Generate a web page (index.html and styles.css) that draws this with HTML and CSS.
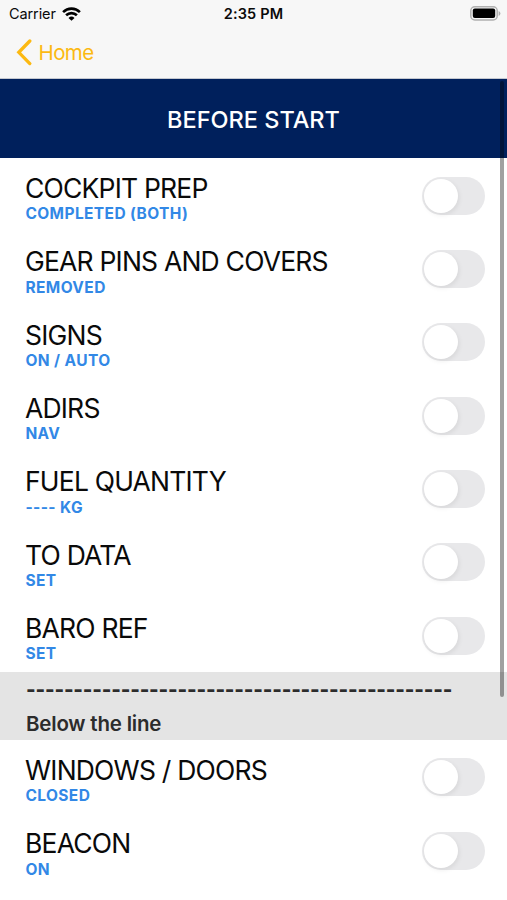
FILE: index.html
```html
<!DOCTYPE html>
<html lang="en">
<head>
<meta charset="utf-8">
<title>Before Start</title>
<link rel="stylesheet" href="styles.css">
</head>
<body>
<div class="screen">
  <header class="top">
    <div class="status">
      <div class="carrier"><span>Carrier</span>
        <svg class="wifi" width="19" height="14" viewBox="0 0 19 14"><g fill="none" stroke="#000" stroke-width="2.6"><path d="M1.1 5.1a12 12 0 0 1 16.8 0"/><path d="M4.1 8.3a7.7 7.7 0 0 1 10.8 0"/></g><path d="M6.5 10.9a4.3 4.3 0 0 1 6 0L9.5 13.8z"/></svg>
      </div>
      <div class="time">2:35 PM</div>
      <svg class="battery" width="31" height="15" viewBox="0 0 31 15"><rect x=".8" y=".8" width="26.4" height="13.2" rx="4" fill="#f7f7f7" stroke="#b0b0b0" stroke-width="1.5"/><rect x="2.8" y="2.6" width="22.4" height="9.4" rx="2" fill="#000"/><path d="M28.6 5v5q1.8-.8 1.8-2.5T28.6 5z" fill="#b0b0b0"/></svg>
    </div>
    <nav class="nav">
      <svg width="17" height="27" viewBox="0 0 17 27"><path d="M14.8 2 3.8 13.3 14.8 24.6" fill="none" stroke="#fcb912" stroke-width="3.3" stroke-linecap="round" stroke-linejoin="miter"/></svg>
      <span class="home">Home</span>
    </nav>
  </header>
  <h1 class="banner"><span>BEFORE START</span></h1>
  <main>
    <div class="row"><div><div class="name">COCKPIT PREP</div><div class="value">COMPLETED (BOTH)</div></div><div class="toggle"></div></div>
    <div class="row"><div><div class="name">GEAR PINS AND COVERS</div><div class="value">REMOVED</div></div><div class="toggle"></div></div>
    <div class="row"><div><div class="name">SIGNS</div><div class="value">ON / AUTO</div></div><div class="toggle"></div></div>
    <div class="row"><div><div class="name">ADIRS</div><div class="value">NAV</div></div><div class="toggle"></div></div>
    <div class="row"><div><div class="name">FUEL QUANTITY</div><div class="value">---- KG</div></div><div class="toggle"></div></div>
    <div class="row"><div><div class="name">TO DATA</div><div class="value">SET</div></div><div class="toggle"></div></div>
    <div class="row"><div><div class="name">BARO REF</div><div class="value">SET</div></div><div class="toggle"></div></div>
    <div class="section"><div class="dashes">---------------------------------------------</div><div class="below">Below the line</div></div>
    <div class="row"><div><div class="name">WINDOWS / DOORS</div><div class="value">CLOSED</div></div><div class="toggle"></div></div>
    <div class="row"><div><div class="name">BEACON</div><div class="value">ON</div></div><div class="toggle"></div></div>
  </main>
  <div class="scrollbar"></div>
</div>
</body>
</html>
```
FILE: styles.css
```css
* { box-sizing: border-box; }
body { margin: 0; background: #fff; font-family: Inter, "Liberation Sans", sans-serif; color: #0a0a0a; }
.screen { position: relative; width: 507px; height: 900px; overflow: hidden; }
.top { height: 79px; background: #f7f7f7; border-bottom: 1px solid #c4c8d0; }
.status { display: grid; grid-template-columns: 1fr auto 1fr; height: 27px; align-items: center; padding: 0 6px 0 9px; }
.carrier { display: flex; align-items: center; gap: 6px; font-size: 14.5px; letter-spacing: -.1px; }
.time { font-size: 14.5px; font-weight: 600; letter-spacing: .15px; margin-right: 3px; }
.battery { justify-self: end; }
.nav { display: flex; align-items: center; gap: 7px; height: 50px; padding-left: 14.5px; }
.home { font-size: 20.5px; letter-spacing: -.6px; color: #fcb912; }
.banner { margin: 0; height: 79.3px; display: flex; align-items: center; justify-content: center; padding-top: 1px; background: #00205c; color: #fff; font-size: 23.5px; font-weight: 550; }
.row { display: flex; justify-content: space-between; height: 73.35px; padding: 13.75px 22px 0 25px; }
.name { font-size: 26.5px; line-height: 32px; letter-spacing: -.8px; white-space: nowrap; }
.value { font-size: 15.5px; line-height: 19px; padding-top: .3px; font-weight: 700; letter-spacing: .4px; color: #3288e6; padding-left: .4px; white-space: nowrap; }
.toggle { width: 63px; height: 38px; margin-top: 4.5px; border-radius: 19px; background: #e8e8ea; padding: 2px; }
.toggle::before { content: ""; display: block; width: 34px; height: 34px; border-radius: 50%; background: #fff; box-shadow: 1px 2px 5px rgba(0, 0, 0, .08); }
.section { height: 68.5px; padding: 6px 0 0 26px; background: #e4e4e4; color: #2c2c2c; font-size: 20.5px; font-weight: 600; white-space: nowrap; }
.dashes { line-height: 24px; font-weight: 800; letter-spacing: -.19px; }
.below { line-height: 26px; margin-top: 9px; letter-spacing: -.2px; }
.scrollbar { position: absolute; top: 81px; right: 3px; width: 4px; height: 616px; border-radius: 2px; background: rgba(0, 0, 0, .37); }
```
